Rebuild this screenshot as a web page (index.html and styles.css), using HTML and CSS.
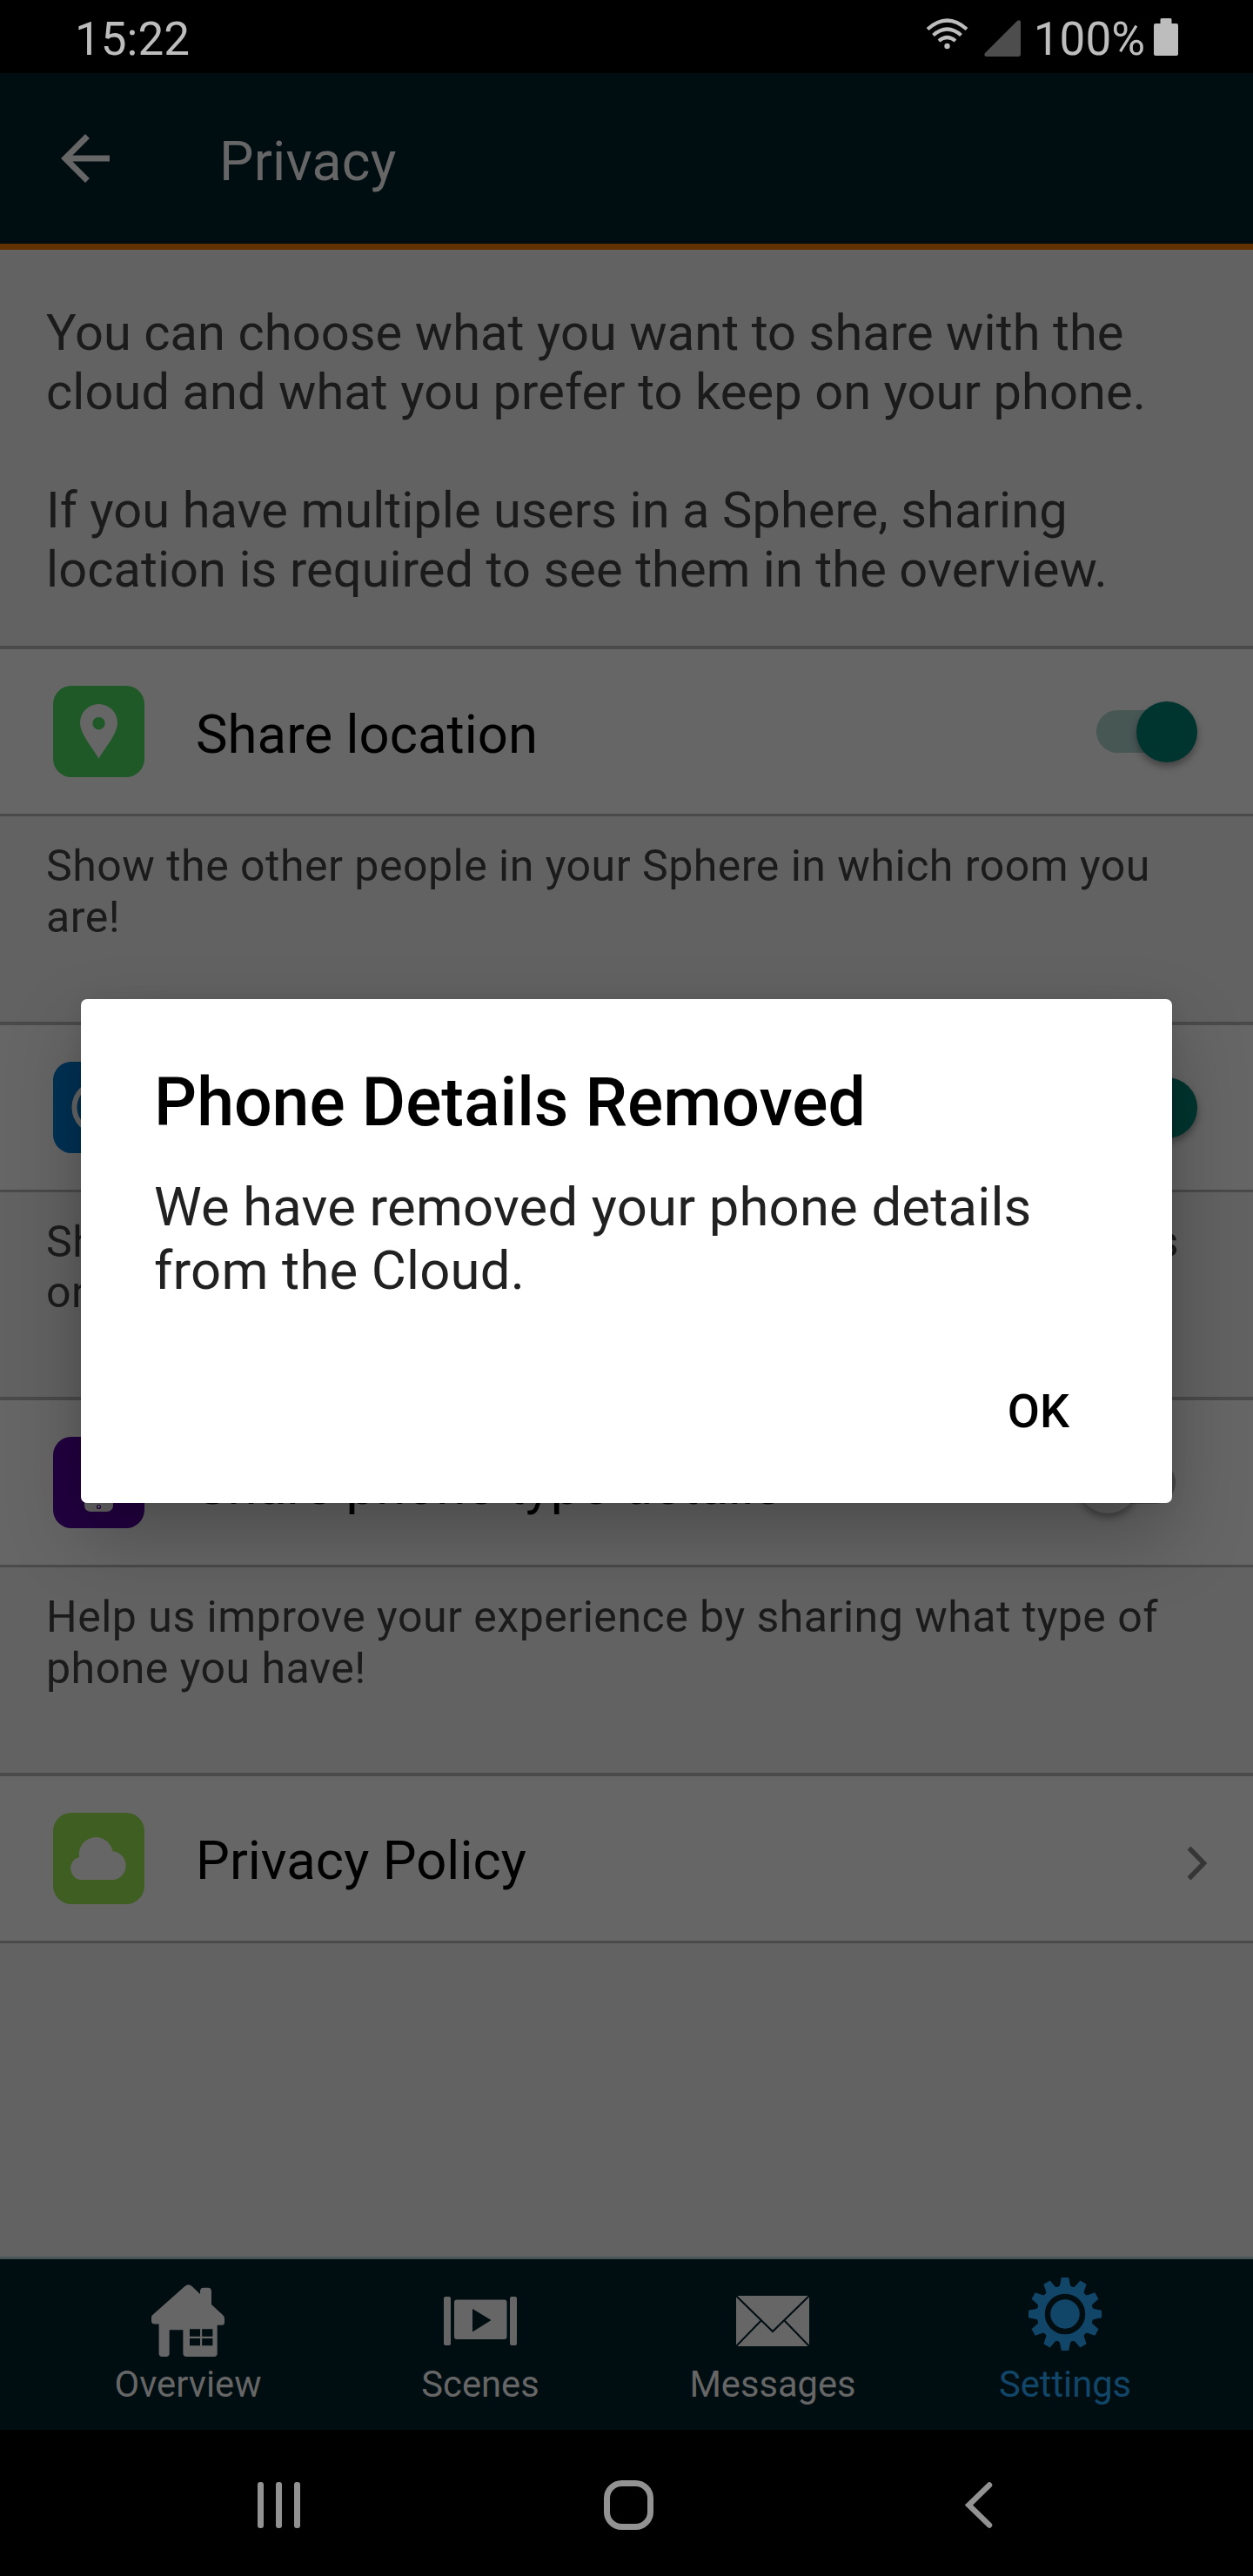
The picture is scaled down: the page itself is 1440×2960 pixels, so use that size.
FILE: index.html
```html
<!DOCTYPE html>
<html lang="en">
<head>
<meta charset="utf-8">
<title>Privacy</title>
<link rel="stylesheet" href="styles.css">
</head>
<body>
<div class="phone">
  <div class="status">
    <span>15:22</span>
    <div class="status-right">
      <svg class="wifi" width="49" height="44" viewBox="0 0 49 44" fill="none" stroke="#bdbdbd" stroke-width="4.2"><path d="M2 13.5Q24.500-6.500 47 13.500M8.500 20.500Q24.500 6.500 40.500 20.500M15 27Q24.500 19 34 27"/><circle cx="24.500" cy="33" r="3.200" fill="#bdbdbd" stroke="none"/></svg>
      <svg class="signal" width="42" height="42" viewBox="0 0 42 42"><path d="M38 1L1 38Q-1 42 3 42H39Q42 42 42 39V2Q41-1 38 1Z" fill="#4d4d4d"/></svg>
      <span>100%</span>
      <svg class="battery" width="28" height="43" viewBox="0 0 28 43"><path d="M9 0H19Q20.500 0 20.500 1.500V6H26Q28 6 28 8V41Q28 43 26 43H2Q0 43 0 41V8Q0 6 2 6H7.500V1.500Q7.500 0 9 0Z" fill="#bdbdbd"/></svg>
    </div>
  </div>

  <header class="header">
    <svg class="back" width="84" height="84" viewBox="0 0 24 24"><path d="M20 11H7.830l5.590-5.590L12 4l-8 8 8 8 1.410-1.410L7.830 13H20v-2z" fill="#666"/></svg>
    <h1>Privacy</h1>
  </header>

  <main class="content">
    <div class="intro">
      <p>You can choose what you want to share with the<br>cloud and what you prefer to keep on your phone.</p>
      <p>If you have multiple users in a Sphere, sharing<br>location is required to see them in the overview.</p>
    </div>

    <div class="row">
      <span class="tile green"><svg width="105" height="105" viewBox="0 0 105 105"><path fill-rule="evenodd" d="M52.500 84C47 73 31 56 31 42.500A21.500 21.500 0 0 1 74 42.500C74 56 58 73 52.500 84ZM52.500 36a7.200 7.200 0 1 0 0 14.400a7.200 7.200 0 1 0 0-14.400Z" fill="#666"/></svg></span>
      <span class="label">Share location</span>
      <span class="switch on"></span>
    </div>
    <p class="note">Show the other people in your Sphere in which room you<br>are!</p>

    <div class="row">
      <span class="tile blue"><svg width="105" height="105" viewBox="0 0 105 105"><circle cx="52.500" cy="52.500" r="28" fill="none" stroke="#666" stroke-width="6"/></svg></span>
      <span class="label">Share switch state</span>
      <span class="switch on"></span>
    </div>
    <p class="note spread"><span>Share whether your Crownstones and their devices</span>on or off.</p>

    <div class="row">
      <span class="tile purple"><svg width="105" height="105" viewBox="0 0 105 105"><rect x="36" y="20" width="33" height="66" rx="7" fill="#666"/><rect x="39" y="28" width="27" height="47" fill="#220040"/><circle cx="52.500" cy="80.500" r="2" fill="none" stroke="#220040" stroke-width="1.200"/></svg></span>
      <span class="label">Share phone type details</span>
      <span class="switch off"></span>
    </div>
    <p class="note">Help us improve your experience by sharing what type of<br>phone you have!</p>

    <div class="row">
      <span class="tile lime"><svg width="105" height="105" viewBox="0 0 105 105"><path d="M32 77A13 13.200 0 0 1 30 51A19.500 19.500 0 1 1 68.500 44.300A16.500 16.500 0 0 1 70 77Z" fill="#666"/></svg></span>
      <span class="label">Privacy Policy</span>
      <svg class="chevron" width="24" height="40" viewBox="0 0 24 40" fill="none" stroke="#363636" stroke-width="5.500"><path d="M2.500 2.500L19.500 20L2.500 37.500"/></svg>
    </div>
  </main>

  <nav class="tabs">
    <div class="tab">
      <div class="tab-icon"><svg width="84" height="84" viewBox="0 0 84 84" fill="#666"><path fill-rule="evenodd" d="M38.500 2Q42.500-1.500 46.500 2L56 11V8Q56 3.700 60 3.700H65Q69 3.700 69 8V23L82 35Q84 37 84 39V44Q84 46.700 81 46.700H75.700V79Q75.700 83 72 83H40.500Q36.400 83 36.400 79V52.300H20.700V79Q20.700 83 17 83H12.500Q8.600 83 8.600 79V45.600H4Q0 45.600 0 42V38Q0 35.500 3 33.500ZM44 51.300V59.800H56V51.300ZM58.200 51.300V59.800H70.400V51.300ZM44 62V70.300H56V62ZM58.200 62V70.300H70.400V62Z"/></svg></div>
      <span>Overview</span>
    </div>
    <div class="tab">
      <div class="tab-icon"><svg width="84" height="56" viewBox="0 0 84 56" fill="#666"><rect width="8" height="56" rx="2"/><rect x="76" width="8" height="56" rx="2"/><path fill-rule="evenodd" d="M15 3.500H69.500Q72.500 3.500 72.500 6.500V46Q72.500 49 69.500 49H15Q12 49 12 46V6.500Q12 3.500 15 3.500ZM33 14V40.500L54.500 27Z"/></svg></div>
      <span>Scenes</span>
    </div>
    <div class="tab">
      <div class="tab-icon"><svg width="84" height="58" viewBox="0 0 84 58"><rect width="84" height="58" rx="2" fill="#666"/><path d="M0 0L42 41L84 0M0 58L28.700 28.500M84 58L55.500 28.500" fill="none" stroke="#000d11" stroke-width="2"/></svg></div>
      <span>Messages</span>
    </div>
    <div class="tab active">
      <div class="tab-icon gear"><svg width="84" height="84" viewBox="-42 -42 84 84" fill="#114669"><defs><path id="teeth" d="M-4.200-42H4.200L6-33L9-28V28L6 33L4.200 42H-4.200L-6 33L-9 28V-28L-6-33Z"/></defs><circle r="32.500"/><use href="#teeth"/><use href="#teeth" transform="rotate(30)"/><use href="#teeth" transform="rotate(60)"/><use href="#teeth" transform="rotate(90)"/><use href="#teeth" transform="rotate(120)"/><use href="#teeth" transform="rotate(150)"/><circle r="20" fill="none" stroke="#000d11" stroke-width="6.500"/></svg></div>
      <span>Settings</span>
    </div>
  </nav>

  <div class="sysnav">
    <svg width="49" height="53" viewBox="0 0 49 53" fill="#929292"><rect width="7" height="53" rx="3"/><rect x="21" width="7" height="53" rx="3"/><rect x="42" width="7" height="53" rx="3"/></svg>
    <svg class="home" width="57" height="57" viewBox="0 0 57 57"><rect x="3.500" y="3.500" width="50" height="50" rx="17" fill="none" stroke="#929292" stroke-width="7"/></svg>
    <svg width="32" height="53" viewBox="0 0 32 53" fill="none" stroke="#929292" stroke-width="6.500" stroke-linecap="round"><path d="M28 3.500L4.500 26.500L28 49.500"/></svg>
  </div>

  <div class="dialog">
    <h2>Phone Details Removed</h2>
    <p>We have removed your phone details<br>from the Cloud.</p>
    <button type="button">OK</button>
  </div>
</div>
</body>
</html>
```
FILE: styles.css
```css
* { box-sizing: border-box; margin: 0; padding: 0; }
body { background: #000; font-family: Roboto, sans-serif; }
svg { display: block; flex: none; }

.phone {
  position: relative;
  display: flex;
  flex-direction: column;
  width: 1440px;
  height: 2960px;
  overflow: hidden;
  background: #000;
}

.status {
  display: flex;
  justify-content: space-between;
  align-items: center;
  height: 84px;
  padding: 0 86px;
  color: #bdbdbd;
  font-size: 53px;
  line-height: 62px;
}
.status span { padding-top: 5px; }
.status-right { display: flex; align-items: center; }
.signal { margin: 4px 15px 0 18px; }
.battery { margin-left: 10px; }

.header {
  display: flex;
  align-items: center;
  height: 203px;
  padding-left: 56px;
  background: #000d11;
  border-bottom: 7px solid #613200;
}
.header h1 {
  margin-left: 112px;
  padding-top: 7px;
  color: #666;
  font-size: 62.600px;
  font-weight: 400;
  line-height: 72px;
  letter-spacing: .2px;
}

.content { height: 2306px; background: #626262; }
.intro {
  height: 455px;
  padding: 61px 53px 0;
  color: #1b1b1b;
  font-size: 57.75px;
  line-height: 68px;
  letter-spacing: .085px;
}
.intro p + p { margin-top: 68px; }

.row {
  display: flex;
  align-items: center;
  height: 196px;
  padding: 0 52px 0 61px;
  background: #666;
  border-top: 4px solid #4a4a4a;
  border-bottom: 3px solid #4a4a4a;
}
.tile { width: 105px; height: 105px; border-radius: 21px; }
.green { background: #1f5928; }
.blue { background: #003154; }
.purple { background: #220040; }
.lime { background: #3f5e22; }
.label {
  flex: 1;
  margin-left: 59px;
  padding-top: 6px;
  color: #000;
  font-size: 61.6px;
  line-height: 72px;
  letter-spacing: .05px;
}
.chevron { margin-top: 12px; }
.switch {
  position: relative;
  width: 91px;
  height: 49px;
  margin-right: 37px;
  border-radius: 25px;
  background: #475754;
}
.switch::after {
  content: "";
  position: absolute;
  top: -10px;
  left: 46px;
  width: 70px;
  height: 70px;
  border-radius: 50%;
  background: #00352f;
  box-shadow: 0 5px 8px rgba(0, 0, 0, .35);
}
.switch.off { background: #484848; }
.switch.off::after { left: -22px; background: #5f5f5f; }

.note {
  height: 235.670px;
  padding: 28px 53px 0;
  color: #1b1b1b;
  font-size: 50.050px;
  line-height: 58.700px;
  letter-spacing: .480px;
  white-space: nowrap;
}
.spread span { display: block; width: 1302px; text-align-last: justify; white-space: normal; }

.tabs {
  display: flex;
  height: 199px;
  padding: 0 48px;
  background: #000d11;
  border-top: 3px solid #485557;
}
.tab {
  flex: 1;
  display: flex;
  flex-direction: column;
  align-items: center;
  color: #666;
  font-size: 41.700px;
  line-height: 50px;
}
.tab-icon { display: flex; align-items: center; height: 119px; padding-top: 22px; }
.tab-icon.gear { padding-top: 7px; }
.tab.active { color: #114669; }

.sysnav {
  display: flex;
  justify-content: space-between;
  align-items: center;
  height: 168px;
  padding: 5px 299px 0 296px;
}
.home { margin-right: 9px; }

.dialog {
  position: absolute;
  top: 1148px;
  left: 93px;
  display: flex;
  flex-direction: column;
  width: 1254px;
  height: 579px;
  padding: 74px 118px 0 84px;
  border-radius: 7px;
  background: #fff;
  box-shadow: 0 38px 84px rgba(0, 0, 0, .25), 0 0 20px rgba(0, 0, 0, .06);
}
.dialog h2 { color: #000; font-size: 77px; font-weight: 500; line-height: 90px; }
.dialog p {
  margin-top: 39px;
  color: #212121;
  font-size: 61.600px;
  line-height: 73px;
  letter-spacing: .190px;
  white-space: nowrap;
}
.dialog button {
  align-self: flex-end;
  margin-top: 93px;
  border: 0;
  background: none;
  color: #000;
  font: 500 53.900px/63px Roboto, sans-serif;
}
```
